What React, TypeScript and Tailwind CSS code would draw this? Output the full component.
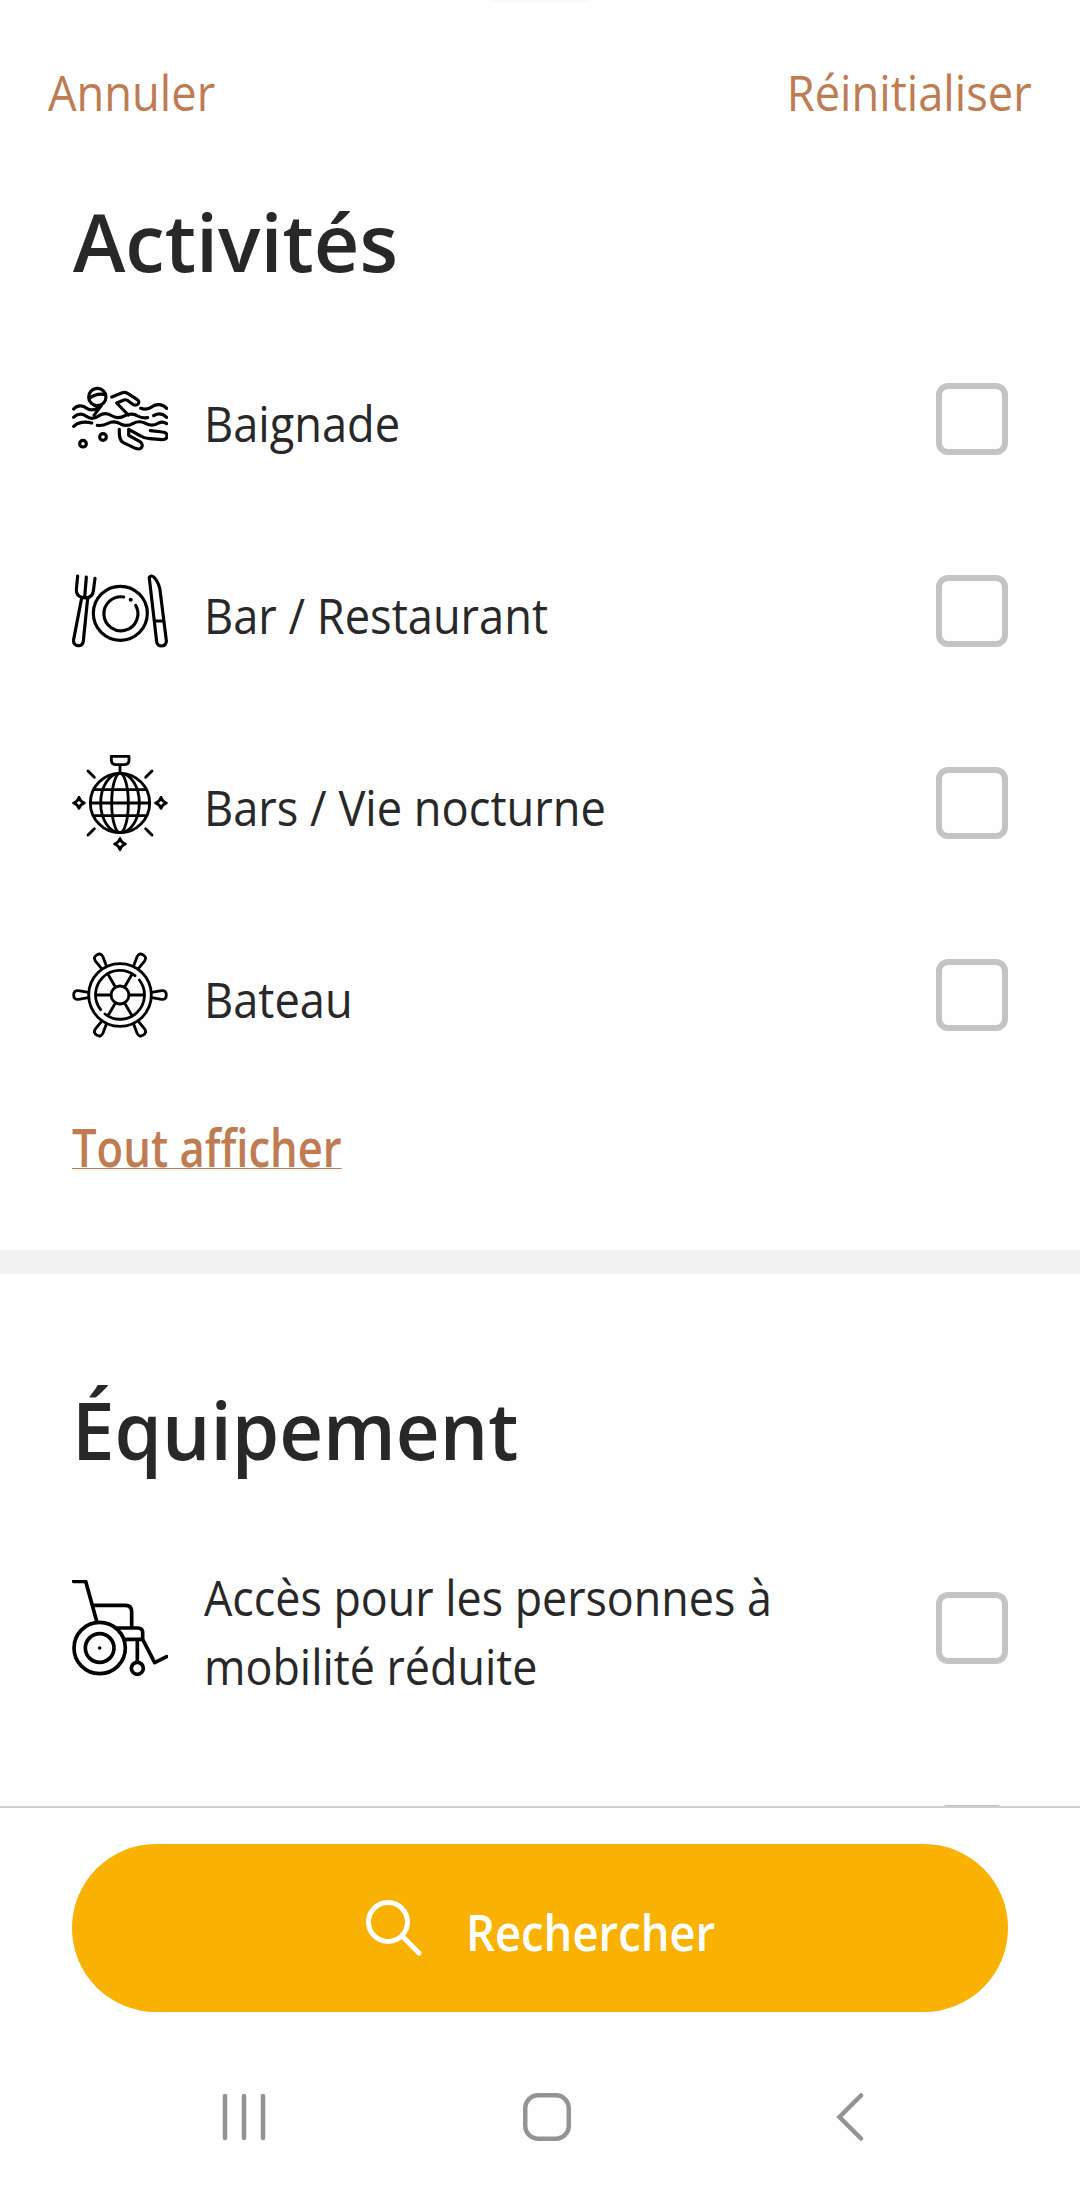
import { ReactNode } from "react";

const stroke = {
  fill: "none",
  stroke: "#000",
  strokeWidth: 9.5,
  strokeLinecap: "round",
  strokeLinejoin: "round",
} as const;

function SwimIcon() {
  return (
    <svg viewBox="36 -12 288 288" className="size-24 shrink-0" {...stroke}>
      <circle cx="112" cy="66" r="26" />
      <path d="M88 70c14-11 32-15 49-11M124 92l-22 29" />
      <path d="M155 66l32-13q8-3 16 2l29 19q8 6 2 13-6 6-14 2l-18-13q-5-3-10-1l-22 9 35 36" />
      <path d="M41 102c10-12 28-12 38-3 12 9 24 7 36-1M242 100c12 4 24 3 34-5 14-10 32-8 44 5" />
      <path d="M41 127c10-12 28-12 38-3 12 9 26 7 38-2 14-9 28-7 40 1 14 8 26 6 38-1 12-7 28-6 38 1 10 6 20 6 30 5M281 122c14-8 28-6 39 5" />
      <path d="M41 154c12-12 34-16 54-10M112 151c14 2 20 0 32-6 14-7 26-5 38 2 14 7 26 5 38-2 12-7 28-6 38 1 14 7 26 6 38-2 10-5 18-2 24 2" />
      <path d="M178 163c0 14-2 32 12 40l36 17q14 5 19-3 5-10-5-17l-34-19 0-18 36 20q12 8 28 8l36 3q15 0 15-12 0-10-14-11l-36-4" />
      <circle cx="129" cy="186" r="10" />
      <circle cx="69" cy="206" r="10" />
    </svg>
  );
}

function PlateIcon() {
  return (
    <svg viewBox="36 9 288 288" className="size-24 shrink-0" {...stroke}>
      <circle cx="181" cy="160" r="81" />
      <path d="M191 111a51 51 0 1 0 36 25" />
      <circle cx="212" cy="119" r="6" fill="#000" stroke="none" />
      <path d="M53 48l-4 40c-1 15 8 23 22 25 16 2 27-5 29-20l5-38M79 51l-5 61" />
      <path d="M65 114L41 238c-2 12 4 18 13 19 9 1 15-4 16-14l13-128" />
      <path d="M268 52c4-6 10-5 16 2 10 12 16 26 17 44l18 144c1 9-5 15-14 16-8 0-14-4-15-13l-22-190M286 183h26" />
    </svg>
  );
}

function DiscoIcon() {
  return (
    <svg viewBox="36 30 288 288" className="size-24 shrink-0" {...stroke} strokeWidth={8.5}>
      <path d="M154 34h53v11q0 14-14 14h-25q-14 0-14-14zM180 59v26" />
      <circle cx="180" cy="174" r="89" />
      <ellipse cx="180" cy="174" rx="58" ry="89" />
      <ellipse cx="180" cy="174" rx="25" ry="89" />
      <path d="M101 134h158M91 174h178M101 212h158" />
      <path d="M84 78l19 19M276 78l-19 19M84 270l19-19M276 270l-19-19" />
      <path d="M57 157q4 13 16 17-12 4-16 16-4-12-16-16 12-4 16-17zM303 157q4 13 16 17-12 4-16 16-4-12-16-16 12-4 16-17zM180 281q4 12 16 16-12 4-16 17-4-13-16-17 12-4 16-16z" />
    </svg>
  );
}

const spokeAngles = [0, 60, 120, 180, 240, 300];

function HelmIcon() {
  return (
    <svg viewBox="36 21 288 288" className="size-24 shrink-0" {...stroke} strokeWidth={8.5}>
      <circle cx="180" cy="165" r="94" />
      <circle cx="180" cy="165" r="27" />
      <path d="M238 120a73 73 0 0 1-103 102M122 209a73 73 0 0 1 103-102" />
      {spokeAngles.map((angle) => (
        <g key={angle} transform={`rotate(${angle} 180 165)`}>
          <path d="M207 165h44M275 157l30-5q14-1 14 13t-14 13l-30-5" />
        </g>
      ))}
    </svg>
  );
}

function WheelchairIcon() {
  return (
    <svg viewBox="36 45 288 288" className="size-24 shrink-0" {...stroke} strokeWidth={11}>
      <path d="M41 49h36l33 120M98 121h98q19 0 19 19v46M170 189h64q14 0 14 14v20h-50M248 223l36 70 36-18M232 225v66" />
      <circle cx="119" cy="249" r="77" />
      <circle cx="119" cy="249" r="43" />
      <circle cx="119" cy="249" r="5.5" fill="#000" stroke="none" />
      <circle cx="232" cy="310" r="18" />
    </svg>
  );
}

interface OptionRowProps {
  icon?: ReactNode;
  label?: string;
  tall?: boolean;
}

function OptionRow({ icon, label, tall }: OptionRowProps) {
  return (
    <li className={`flex items-center ${tall ? "h-[234px]" : "h-48"}`}>
      {icon}
      <span
        className={`mt-2 ml-9 w-[670px] origin-left text-[50px] leading-[69px] ${tall ? "scale-x-[0.896]" : "scale-x-[0.904]"}`}
      >
        {label}
      </span>
      <span className="ml-auto size-[72px] shrink-0 rounded-xl border-[6px] border-[#c4c4c4]" />
    </li>
  );
}

export default function App() {
  return (
    <div className="flex h-[2192px] w-[1080px] flex-col overflow-hidden bg-[#fefefe] font-['Open_Sans','Noto_Sans',sans-serif] text-[#282828]">
      {/* Sheet handle */}
      <div className="mx-auto h-0.5 w-[100px] shrink-0 bg-[#f8f8f8]" />

      {/* Header */}
      <header className="flex h-[183px] shrink-0 items-center justify-between pr-12 pb-0.5 pl-12 text-[50px] text-[#bf7b52]">
        <button className="origin-left scale-x-[0.905]">Annuler</button>
        <button className="origin-right scale-x-[0.905]">Réinitialiser</button>
      </header>

      {/* Filters */}
      <main className="h-[1621px] shrink-0 overflow-hidden">
        <section className="h-[1065px] px-[72px] pt-2">
          <h2 className="ml-px origin-left scale-x-[0.99] text-[80px] leading-24 font-semibold">Activités</h2>
          <ul className="mt-[34px]">
            <OptionRow icon={<SwimIcon />} label="Baignade" />
            <OptionRow icon={<PlateIcon />} label="Bar / Restaurant" />
            <OptionRow icon={<DiscoIcon />} label="Bars / Vie nocturne" />
            <OptionRow icon={<HelmIcon />} label="Bateau" />
          </ul>
          <button className="mt-6 block origin-left scale-x-[0.838] text-[52px] leading-16 font-semibold text-[#bf7b52] underline decoration-1">
            Tout afficher
          </button>
        </section>
        <div className="h-6 bg-[#f1f1f1]" />
        <section className="px-[72px] pt-[107px]">
          <h2 className="origin-left scale-x-[0.953] text-[80px] leading-24 font-semibold">Équipement</h2>
          <ul className="mt-[34px]">
            <OptionRow icon={<WheelchairIcon />} label="Accès pour les personnes à mobilité réduite" tall />
            <OptionRow />
          </ul>
        </section>
      </main>

      {/* Search bar */}
      <footer className="shrink-0 border-t-2 border-[#cfcfcf] px-[72px] pt-9">
        <button className="flex h-[168px] w-full items-center rounded-full bg-[#f9b104] pl-[294px] text-[50px] font-semibold text-white">
          <svg viewBox="0 0 56 56" className="size-14" fill="none" stroke="#fff" strokeWidth="5" strokeLinecap="round">
            <circle cx="22" cy="22" r="19.5" />
            <path d="M36 36l17 17" />
          </svg>
          <span className="mt-2 ml-11 origin-left scale-x-[0.907]">Rechercher</span>
        </button>
      </footer>

      {/* System navigation */}
      <nav className="flex gap-[255px] pt-[81px] pl-[220px]">
        <svg viewBox="0 0 48 48" className="size-12" fill="none" stroke="#939393" strokeWidth="4.5" strokeLinecap="round">
          <path d="M5 3v42M24 3v42M43 3v42" />
        </svg>
        <svg viewBox="0 0 48 48" className="size-12" fill="none" stroke="#939393" strokeWidth="4.5">
          <rect x="2.25" y="2.25" width="43.5" height="43.5" rx="13" />
        </svg>
        <svg viewBox="0 0 48 48" className="size-12" fill="none" stroke="#939393" strokeWidth="4.5" strokeLinecap="round">
          <path d="M35 2.5L13.5 24 35 45.500" />
        </svg>
      </nav>
    </div>
  );
}
